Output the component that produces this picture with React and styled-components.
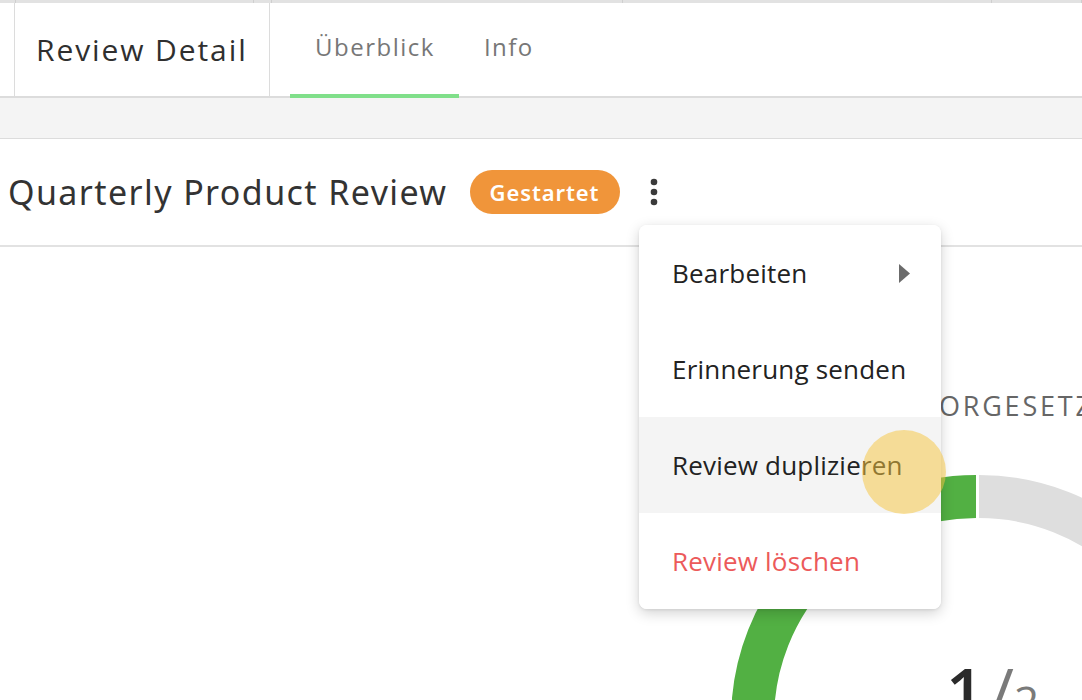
import React from 'react';
import styled, { createGlobalStyle } from 'styled-components';

const GlobalStyle = createGlobalStyle`
    html, body {
        margin: 0;
        padding: 0;
        background: #ffffff;
        overflow: hidden;
    }
    body {
        font-family: "Open Sans", "Lato", sans-serif;
        color: #333333;
    }
`

const StyledPage = styled.div`
    position: relative;
    width: 1082px;
    height: 700px;
    overflow: hidden;
    background: #ffffff;
`

const StyledTopStrip = styled.div`
    display: flex;
    height: 3px;
    background: #e2e2e2;
`

const StyledStripCell = styled.div`
    width: ${(p) => p.width ? `${p.width}px` : 'auto'};
    flex: ${(p) => p.width ? 'none' : 1};
    border-right: 1px solid #cfcfcf;
`

const StyledHeader = styled.div`
    display: flex;
    height: 93px;
    border-bottom: 2px solid #dcdcdc;
`

const StyledHeaderGap = styled.div`
    width: 14px;
    border-right: 1px solid #dcdcdc;
`

const StyledTitleCell = styled.div`
    width: 233px;
    padding-left: 21px;
    display: flex;
    align-items: center;
    border-right: 1px solid #dcdcdc;
    font-size: 30px;
    color: #2f2f2f;
    letter-spacing: 1.9px;
`

const StyledTabs = styled.div`
    display: flex;
    padding-left: 20px;
`

const StyledTab = styled.div`
    display: flex;
    align-items: center;
    padding: 0 24px 4px 25px;
    font-size: 24px;
    letter-spacing: 1.5px;
    color: #777777;
    border-bottom: 4px solid ${(p) => p.active ? '#80df8a' : 'transparent'};
    margin-bottom: -2px;
`

const StyledBand = styled.div`
    height: 40px;
    background: #f4f4f4;
    border-bottom: 1px solid #dcdcdc;
`

const StyledReviewRow = styled.div`
    display: flex;
    align-items: center;
    height: 106px;
    padding-left: 8px;
    border-bottom: 2px solid #e2e2e2;
`

const StyledReviewTitle = styled.h1`
    margin: 0;
    font-family: "Noto Sans", "Open Sans", sans-serif;
    font-weight: 400;
    font-size: 34px;
    letter-spacing: 1.4px;
    color: #333333;
`

const StyledBadge = styled.span`
    margin-left: 22px;
    height: 44px;
    width: 150px;
    display: inline-flex;
    align-items: center;
    justify-content: center;
    border-radius: 22px;
    background: #f0953a;
    color: #ffffff;
    font-family: "Noto Sans", "Open Sans", sans-serif;
    font-weight: 600;
    font-size: 22px;
    letter-spacing: 0.9px;
`

const StyledKebab = styled.button`
    margin-left: 28px;
    width: 12px;
    padding: 0;
    border: none;
    background: none;
    display: flex;
    align-items: center;
`

const StyledContent = styled.div`
    display: flex;
    padding-left: 732px;
`

const StyledChartColumn = styled.div`
    display: flex;
    flex-direction: column;
    width: 490px;
    flex: none;
`

const StyledChartLabel = styled.div`
    margin: 143px 0 0 188px;
    font-size: 27px;
    letter-spacing: 2.8px;
    color: #666666;
    white-space: nowrap;
    line-height: 32px;
`

const StyledChartBox = styled.div`
    position: relative;
    margin-top: 53px;
    width: 490px;
    height: 490px;
`

const StyledChartValue = styled.div`
    position: absolute;
    left: 214px;
    top: 182px;
    display: flex;
    align-items: flex-start;
    font-size: 66px;
    line-height: 1;
    white-space: nowrap;
`

const StyledValueMain = styled.span`
    color: #2b2b2b;
    font-weight: 600;
`

const StyledValueSlash = styled.span`
    color: #7a7a7a;
    margin-left: 6px;
`

const StyledValueTotal = styled.span`
    color: #7a7a7a;
    font-size: 44px;
    margin-top: 22px;
`

const StyledMenu = styled.div`
    position: absolute;
    left: 639px;
    top: 225px;
    width: 302px;
    background: #ffffff;
    border-radius: 8px;
    box-shadow: 0 4px 14px rgba(0, 0, 0, 0.18), 0 1px 3px rgba(0, 0, 0, 0.08);
    overflow: hidden;
    display: flex;
    flex-direction: column;
`

const StyledMenuItem = styled.div`
    height: 96px;
    display: flex;
    align-items: center;
    justify-content: space-between;
    padding: 0 31px 0 33px;
    font-size: 26px;
    letter-spacing: 0.2px;
    color: ${(p) => p.danger ? '#ec5a5a' : '#222222'};
    background: ${(p) => p.hovered ? '#f4f4f4' : '#ffffff'};
    white-space: nowrap;
`

const StyledTouch = styled.div`
    position: absolute;
    left: 862px;
    top: 430px;
    width: 84px;
    height: 84px;
    border-radius: 50%;
    background: rgba(245, 198, 66, 0.52);
    pointer-events: none;
`

const stripCells = [15, 237, 17, 350, 368, null];

const menuItems = [
    { label: 'Bearbeiten', submenu: true },
    { label: 'Erinnerung senden' },
    { label: 'Review duplizieren', hovered: true },
    { label: 'Review löschen', danger: true },
];

const KebabIcon = () => (
    <svg width="12" height="32" viewBox="0 0 12 32">
        <circle cx="6" cy="6" r="3.3" fill="#3a3a3a" />
        <circle cx="6" cy="16" r="3.3" fill="#3a3a3a" />
        <circle cx="6" cy="26" r="3.3" fill="#3a3a3a" />
    </svg>
)

const SubmenuArrow = () => (
    <svg width="11" height="19" viewBox="0 0 11 19">
        <path d="M0 0 L11 9.5 L0 19 Z" fill="#6b6b6b" />
    </svg>
)

const Donut = () => (
    <svg width="490" height="490" viewBox="0 0 490 490">
        <path d="M244 21.5 A223.5 223.5 0 0 0 244 468.5" fill="none" stroke="#52b043" strokeWidth="43" />
        <path d="M247 21.5 A223.5 223.5 0 0 1 247 468.5" fill="none" stroke="#dedede" strokeWidth="43" />
    </svg>
)

const App = () => {
    return (
        <StyledPage>
            <GlobalStyle />
            <StyledTopStrip>
                {stripCells.map((w, index) => <StyledStripCell key={index} width={w} />)}
            </StyledTopStrip>
            <StyledHeader>
                <StyledHeaderGap />
                <StyledTitleCell>Review Detail</StyledTitleCell>
                <StyledTabs>
                    <StyledTab active>Überblick</StyledTab>
                    <StyledTab>Info</StyledTab>
                </StyledTabs>
            </StyledHeader>
            <StyledBand />
            <StyledReviewRow>
                <StyledReviewTitle>Quarterly Product Review</StyledReviewTitle>
                <StyledBadge>Gestartet</StyledBadge>
                <StyledKebab><KebabIcon /></StyledKebab>
            </StyledReviewRow>
            <StyledContent>
                <StyledChartColumn>
                    <StyledChartLabel>VORGESETZTE</StyledChartLabel>
                    <StyledChartBox>
                        <Donut />
                        <StyledChartValue>
                            <StyledValueMain>1</StyledValueMain>
                            <StyledValueSlash>/</StyledValueSlash>
                            <StyledValueTotal>2</StyledValueTotal>
                        </StyledChartValue>
                    </StyledChartBox>
                </StyledChartColumn>
            </StyledContent>
            <StyledMenu>
                {menuItems.map((item) => (
                    <StyledMenuItem key={item.label} danger={item.danger} hovered={item.hovered}>
                        <span>{item.label}</span>
                        {item.submenu && <SubmenuArrow />}
                    </StyledMenuItem>
                ))}
            </StyledMenu>
            <StyledTouch />
        </StyledPage>
    )
}

export default App;
